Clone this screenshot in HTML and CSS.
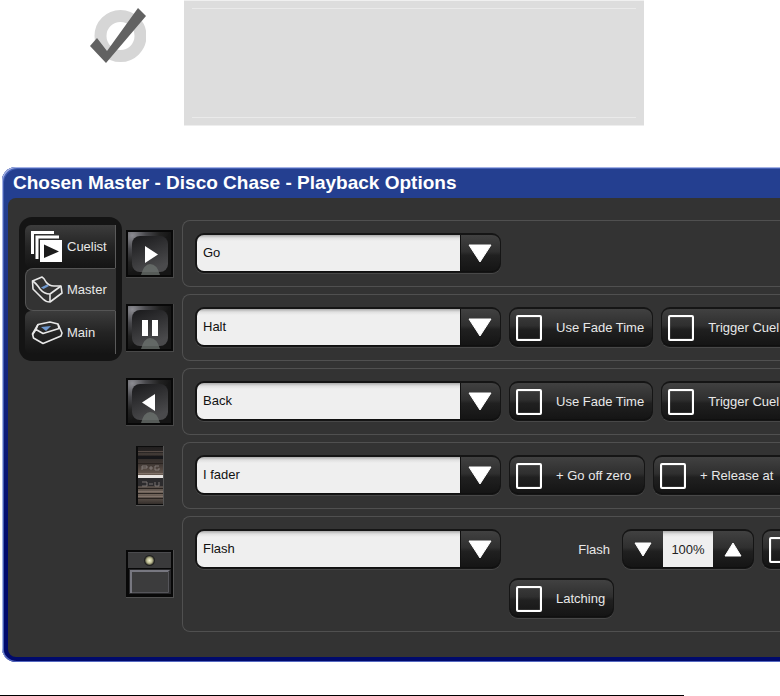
FILE: index.html
```html
<!DOCTYPE html>
<html lang="en">
<head>
<meta charset="utf-8">
<title>Playback Options</title>
<link rel="stylesheet" href="styles.css">
</head>
<body>
<aside class="note">
  <svg class="note-icon" viewBox="0 0 56 56" aria-hidden="true">
    <circle cx="30.500" cy="28" r="20" fill="none" stroke="#d6d6d6" stroke-width="12"/>
    <path d="M0 38 L7 30 L17 43 L48 0 L56 8 L16 55 Z" fill="#626262"/>
  </svg>
  <div class="note-box"><div class="note-lines"></div></div>
</aside>

<main class="window">
  <h1 class="title">Chosen Master - Disco Chase - Playback Options</h1>
  <div class="content">
    <nav class="tabs" aria-label="Options">
      <button class="tab" type="button">
        <svg viewBox="0 0 32 32" aria-hidden="true">
          <path d="M0 0H23V3H3V23H0Z" fill="#fff"/>
          <path d="M4.500 4.500H28V7.500H7.500V28H4.500Z" fill="#fff"/>
          <path d="M9 9H31V31H9Z" fill="#fff"/>
          <path d="M13 13.500V27L28 20.500Z" fill="#1c1c1c"/>
        </svg>Cuelist
      </button>
      <button class="tab active" type="button">
        <svg viewBox="0 0 32 32" aria-hidden="true">
          <g fill="none" stroke="#e8e8e8" stroke-width="1.600" stroke-linejoin="round">
            <path d="M1.500 7L11 3Q13 4 15 8Q18 12 23 12L30 12L31 19L19 28Q15 28 12 25L2 15Z"/>
            <path d="M1.500 7Q5 9 9 15Q13 20 19 20L30 12M19 20V28"/>
          </g>
          <path d="M10 13.500L16 10.500L18 12L12.500 15Z" fill="#6f98cf"/>
        </svg>Master
      </button>
      <button class="tab" type="button">
        <svg viewBox="0 0 32 32" aria-hidden="true">
          <g fill="none" stroke="#e8e8e8" stroke-width="1.600" stroke-linejoin="round">
            <path d="M1.500 17L7 7.500L19 5L27 7L31 16L30 19L12 26.500L2.500 21Z"/>
            <path d="M7 7.500L5 12.500L12 16.500L28 11.500L27 7M1.500 17.500L5 12.500"/>
          </g>
          <path d="M10 10L20 9L15 14Z" fill="#6f98cf"/>
        </svg>Main
      </button>
    </nav>

    <div class="rows">
      <section class="row">
        <svg class="key" viewBox="0 0 48 48" aria-hidden="true">
          <defs>
            <radialGradient id="bevel" cx="0.100" cy="0.080" r="0.900"><stop offset="0" stop-color="#8c8c92"/><stop offset="0.350" stop-color="#48484c"/><stop offset="0.700" stop-color="#222"/><stop offset="1" stop-color="#151515"/></radialGradient>
            <linearGradient id="cap" x1="0" y1="0" x2="0.400" y2="1"><stop offset="0" stop-color="#19191b"/><stop offset="1" stop-color="#4a4a4c"/></linearGradient>
            <g id="keybase">
              <path d="M0 0H48V48H0Z" fill="#484848"/>
              <path d="M0 0H47V47H0Z" fill="#080808"/>
              <path d="M2 2H45V45H2Z" fill="url(#bevel)"/>
              <path d="M45 2V45H2L8 39H39V8Z" fill="#151515" opacity="0.600"/>
              <rect x="6" y="6" width="36" height="36" rx="8" fill="url(#cap)"/>
              <path d="M15 45Q18 34 24 34Q31 34 34 45Z" fill="#6c736f" opacity="0.750"/>
            </g>
          </defs>
          <use href="#keybase"/><path d="M19 16V33L32 24.500Z" fill="#fff"/>
        </svg>
        <div class="group"><div class="line">
          <div class="combo"><select aria-label="Go button action"><option>Go</option></select><svg viewBox="0 0 40 40" aria-hidden="true"><path d="M9 12H31L20 29Z"/></svg></div>
        </div></div>
      </section>

      <section class="row">
        <svg class="key" viewBox="0 0 48 48" aria-hidden="true"><use href="#keybase"/><path d="M16 16H22V32H16ZM26 16H32V32H26Z" fill="#fff"/></svg>
        <div class="group"><div class="line">
          <div class="combo"><select aria-label="Halt button action"><option>Halt</option></select><svg viewBox="0 0 40 40" aria-hidden="true"><path d="M9 12H31L20 29Z"/></svg></div>
          <label class="check"><input type="checkbox">Use Fade Time</label>
          <label class="check bleed"><input type="checkbox">Trigger Cuel</label>
        </div></div>
      </section>

      <section class="row">
        <svg class="key" viewBox="0 0 48 48" aria-hidden="true"><use href="#keybase"/><path d="M29 16V33L16 24.500Z" fill="#fff"/></svg>
        <div class="group"><div class="line">
          <div class="combo"><select aria-label="Back button action"><option>Back</option></select><svg viewBox="0 0 40 40" aria-hidden="true"><path d="M9 12H31L20 29Z"/></svg></div>
          <label class="check"><input type="checkbox">Use Fade Time</label>
          <label class="check bleed"><input type="checkbox">Trigger Cuel</label>
        </div></div>
      </section>

      <section class="row">
        <svg class="key fader" viewBox="0 0 28 60" aria-hidden="true">
          <defs><linearGradient id="wheel" x1="0" x2="0" y1="0" y2="1"><stop offset="0" stop-color="#211f1f"/><stop offset="0.300" stop-color="#3e3632"/><stop offset="0.480" stop-color="#66584f"/><stop offset="0.600" stop-color="#3b3634"/><stop offset="0.820" stop-color="#74675d"/><stop offset="1" stop-color="#342e2b"/></linearGradient></defs>
          <path d="M0 0H28V60H0Z" fill="#555"/>
          <path d="M0 0H27V59H0Z" fill="#0c0c0c"/>
          <path d="M2 1H27V58H2Z" fill="url(#wheel)"/>
          <path d="M2 5.500H27M2 8H27" stroke="#554a45"/>
          <path d="M2 10H27V13H2Z" fill="#17171a"/>
          <path d="M2 17.500H27M2 42.500H27M2 47.500H27M2 52.500H27" stroke="#2a2421"/>
          <path d="M2 27.500H27M2 45.500H27M2 50.500H27" stroke="#81736a"/>
          <path d="M2 32H27V40H2Z" fill="#2c2b2d"/>
          <path d="M6 24V20H11V22H6M13 22H17M15 20V24M23 20H19V24H23V22M6 36H11V40H6M13 38H17M19 36V40H23V36" fill="none" stroke="#8e8783" stroke-width="0.800"/>
          <path d="M2 29H27V32H2Z" fill="#e8e4e1"/>
        </svg>
        <div class="group"><div class="line">
          <div class="combo"><select aria-label="Fader action"><option>I fader</option></select><svg viewBox="0 0 40 40" aria-hidden="true"><path d="M9 12H31L20 29Z"/></svg></div>
          <label class="check medium"><input type="checkbox">+ Go off zero</label>
          <label class="check bleed"><input type="checkbox">+ Release at</label>
        </div></div>
      </section>

      <section class="row">
        <svg class="key" viewBox="0 0 48 48" aria-hidden="true">
          <defs><radialGradient id="led"><stop offset="0" stop-color="#f4f3d2"/><stop offset="0.600" stop-color="#b9b88e"/><stop offset="1" stop-color="#4c4c3c"/></radialGradient></defs>
          <path d="M0 0H48V48H0Z" fill="#505050"/>
          <path d="M0 0H47V47H0Z" fill="#080808"/>
          <path d="M2 2H45V18H2Z" fill="#3a3a3b"/>
          <path d="M2 2.500H45" stroke="#4b4b4e"/>
          <circle cx="23.500" cy="10.500" r="5.500" fill="#1f1f1f"/>
          <circle cx="23.500" cy="10.500" r="4.500" fill="url(#led)"/>
          <path d="M3 19H45V44H3Z" fill="#29292b"/>
          <path d="M4 20H44L42 22H6V43H4Z" fill="#777780"/>
          <path d="M6 22H42V42H6Z" fill="#3c3c3d"/>
          <path d="M42.500 22V42.500H6" fill="none" stroke="#55555a"/>
        </svg>
        <div class="group">
          <div class="line">
            <div class="combo"><select aria-label="Flash button action"><option>Flash</option></select><svg viewBox="0 0 40 40" aria-hidden="true"><path d="M9 12H31L20 29Z"/></svg></div>
            <label class="caption" for="level">Flash</label>
            <div class="spinner">
              <button type="button" aria-label="Decrease"><svg viewBox="0 0 40 40" aria-hidden="true"><path d="M12 14H28L20 27Z"/></svg></button>
              <input id="level" type="text" value="100%">
              <button type="button" aria-label="Increase"><svg viewBox="0 0 40 40" aria-hidden="true"><path d="M12 27H28L20 14Z"/></svg></button>
            </div>
            <label class="check bleed"><input type="checkbox" aria-label="Flash option"></label>
          </div>
          <div class="line second">
            <label class="check"><input type="checkbox">Latching</label>
          </div>
        </div>
      </section>
    </div>
  </div>
</main>
<hr class="rule">
</body>
</html>
```
FILE: styles.css
```css
* { box-sizing: border-box; }
html { overflow: hidden; background: #fff; }
body {
  margin: 0;
  font: 13px/16px "Liberation Sans", Arial, sans-serif;
  color: #e8e8e8;
}
button, input, select { font: inherit; color: inherit; margin: 0; }

/* Note */
.note { display: flex; gap: 38px; padding-left: 90px; }
.note-icon { width: 56px; height: 56px; margin-top: 8px; }
.note-box {
  width: 460px;
  height: 126px;
  padding: 7px 8px;
  background: #ddd;
  border-top: 1px solid #f0f0f0;
  border-bottom: 1px solid #eee;
}
.note-lines {
  height: 110px;
  border-top: 1px solid #eaeaea;
  border-bottom: 1px solid #eaeaea;
}

/* Window frame */
.window {
  margin: 41px 0 0 2px;
  padding: 0 0 5px 6px;
  border-radius: 14px 0 0 14px;
  background: linear-gradient(#243f90 32px, #22398c 80px, #000a6c 380px);
  box-shadow: inset 1px 1px 0 #a4b2e4, inset 2px 2px 0 #4560b4, inset 1px -1px 0 #5468c0;
}
.title {
  margin: 0;
  padding: 5px 5px 4px;
  font-size: 19px;
  line-height: 22px;
  font-weight: bold;
  color: #fff;
  white-space: nowrap;
}
.content {
  display: flex;
  align-items: flex-start;
  gap: 4px;
  padding: 19px 0 25px 11px;
  background: #333;
  border-radius: 8px 0 0 8px;
}

/* Tabs */
.tabs {
  flex: none;
  display: flex;
  flex-direction: column;
  width: 103px;
  padding: 8px 6px 7px;
  border-radius: 13px;
  background: #141414;
}
.tab {
  display: flex;
  align-items: center;
  gap: 4px;
  height: 43px;
  padding: 0 0 0 6px;
  border: 0;
  border-right: 1px solid #5a5a5a;
  border-radius: 6px 0 0 6px;
  background: linear-gradient(#3c3c3c, #242424 50%, #141414);
}
.tab.active {
  border: 1px solid #555;
  border-right-color: #333;
  padding-left: 5px;
  border-radius: 8px 0 0 8px;
  background: #333;
}
.tab svg { width: 32px; height: 32px; flex: none; }

/* Option rows */
.rows {
  flex: 1;
  min-width: 0;
  display: flex;
  flex-direction: column;
  gap: 7px;
  padding-top: 3px;
}
.row { display: flex; align-items: center; gap: 8px; }
.key { flex: none; width: 48px; height: 48px; }
.fader { width: 28px; height: 60px; margin: 0 10px; }
.group {
  flex: 1;
  min-width: 0;
  padding: 12px 0 12px 12px;
  overflow: hidden;
  border: 1px solid #505050;
  border-right: 0;
  border-radius: 8px 0 0 8px;
}
.line { display: flex; gap: 8px; }
.second { margin-top: 8px; padding-left: 314px; }

.combo, .check, .spinner {
  flex: none;
  height: 40px;
  margin-bottom: 1px;
  border: 1px solid #151515;
  border-top-width: 2px;
  border-radius: 9px;
  background: linear-gradient(#414141, #2f2f2f 45%, #202020 55%, #141414);
  box-shadow: inset 0 -1px 0 #101010, 0 1px 0 #484848;
  white-space: nowrap;
}

.combo { display: grid; width: 306px; border-left-width: 2px; }
.combo select {
  grid-area: 1 / 1;
  appearance: none;
  width: 264px;
  height: 36px;
  padding: 0 6px;
  border: 0;
  border-right: 1px solid #111;
  border-radius: 7px 0 0 7px;
  background: linear-gradient(#aaa, #e0e0e0 3px, #efefef 6px);
  color: #111;
}
.combo svg { grid-area: 1 / 1; justify-self: end; pointer-events: none; }
.combo svg, .spinner svg {
  display: block;
  width: 40px;
  height: 40px;
  margin-top: -2px;
  fill: #fff;
  stroke: #fff;
  stroke-linejoin: round;
}

.check {
  display: flex;
  align-items: center;
  gap: 14px;
  padding: 0 8px 0 6px;
}
.check input {
  appearance: none;
  flex: none;
  width: 26px;
  height: 26px;
  border: 2px solid #fff;
  border-radius: 2px;
  box-shadow: inset 0 0 1px #fff;
}
.medium { min-width: 136px; }
.bleed { flex: 1 0 auto; padding-right: 0; border-right: 0; border-radius: 9px 0 0 9px; }

.caption { flex: none; width: 105px; padding-right: 4px; line-height: 41px; text-align: right; }
.spinner { display: flex; width: 132px; }
.spinner button { flex: none; width: 40px; height: 36px; padding: 0; border: 0; background: none; }
.spinner input {
  flex: 1;
  min-width: 0;
  height: 36px;
  padding: 0;
  border: 0;
  background: linear-gradient(#aaa, #e0e0e0 3px, #efefef 6px);
  color: #222;
  text-align: center;
}

.rule { width: 684px; height: 1px; margin: 33px 0 0; border: 0; background: #000; }
```
